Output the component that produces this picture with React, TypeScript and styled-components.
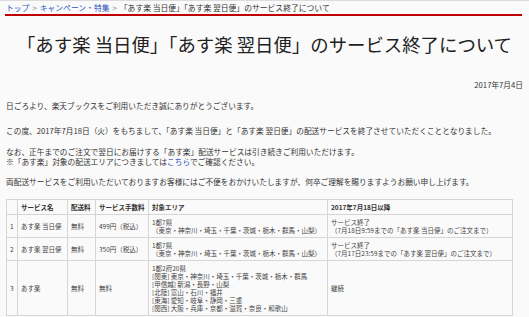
import React from "react";
import styled, { createGlobalStyle } from "styled-components";

const Global = createGlobalStyle`
  html, body { margin: 0; padding: 0; background: #fafafa; }
  body {
    font-family: "Noto Sans CJK JP", "Noto Sans", sans-serif;
    color: #333;
  }
`;

const Page = styled.div`
  border-top: 1px solid #dcdcdc;
  padding: 0 6px;
`;

const Breadcrumb = styled.nav`
  font-size: 7.8px;
  line-height: 10px;
  padding: 2px 0 1px;
  color: #333;
  white-space: nowrap;
`;

const Crumb = styled.a`
  color: #2a52be;
  text-decoration: none;
`;

const Sep = styled.span`
  color: #777;
  margin: 0 3px;
`;

const RedRule = styled.div`
  height: 2px;
  background: #bf0000;
  margin: 0 1px 0 -1px;
`;

const Title = styled.h1`
  margin: 16px 0 0;
  font-size: 18.4px;
  font-weight: 400;
  line-height: 24px;
  text-align: center;
  color: #222;
  white-space: nowrap;
`;

const DateLine = styled.p`
  margin: 24px 0 0;
  text-align: right;
  font-size: 7.7px;
  line-height: 10px;
`;

const Para = styled.p<{ $gap: number }>`
  margin: ${(p) => p.$gap}px 0 0;
  font-size: 7.7px;
  line-height: 10px;
  white-space: nowrap;
`;

const Link = styled.a`
  color: #2a52be;
  text-decoration: none;
`;

const Table = styled.table`
  margin-top: 12px;
  width: 506px;
  table-layout: fixed;
  border-collapse: collapse;
  font-size: 6.5px;
  line-height: 8px;
  border: 1px solid #cfcfcf;
`;

const Col = styled.col<{ $w: number }>`
  width: ${(p) => p.$w}px;
`;

const Th = styled.th`
  text-align: left;
  font-weight: 700;
  padding: 3px 3px;
  border: 1px solid #d6d6d6;
  white-space: nowrap;
  color: #333;
`;

const Td = styled.td`
  padding: 3px 3px;
  border: 1px solid #d6d6d6;
  vertical-align: middle;
  white-space: nowrap;
  color: #444;
`;

const Line = styled.div``;

type Row = {
  no: string;
  name: string;
  ship: string;
  fee: string;
  area: string[];
  after: string[];
};

const rows: Row[] = [
  {
    no: "1",
    name: "あす楽 当日便",
    ship: "無料",
    fee: "499円（税込）",
    area: ["1都7県", "（東京・神奈川・埼玉・千葉・茨城・栃木・群馬・山梨）"],
    after: ["サービス終了", "（7月18日9:59までの「あす楽 当日便」のご注文まで）"],
  },
  {
    no: "2",
    name: "あす楽 翌日便",
    ship: "無料",
    fee: "350円（税込）",
    area: ["1都7県", "（東京・神奈川・埼玉・千葉・茨城・栃木・群馬・山梨）"],
    after: ["サービス終了", "（7月17日23:59までの「あす楽 翌日便」のご注文まで）"],
  },
  {
    no: "3",
    name: "あす楽",
    ship: "無料",
    fee: "無料",
    area: [
      "1都2府20県",
      "[関東] 東京・神奈川・埼玉・千葉・茨城・栃木・群馬",
      "[甲信越] 新潟・長野・山梨",
      "[北陸] 富山・石川・福井",
      "[東海] 愛知・岐阜・静岡・三重",
      "[関西] 大阪・兵庫・京都・滋賀・奈良・和歌山",
    ],
    after: ["継続"],
  },
];

export default function App() {
  return (
    <>
      <Global />
      <Page>
        <Breadcrumb>
          <Crumb href="#">トップ</Crumb>
          <Sep>&gt;</Sep>
          <Crumb href="#">キャンペーン・特集</Crumb>
          <Sep>&gt;</Sep>
          <span>「あす楽 当日便」「あす楽 翌日便」のサービス終了について</span>
        </Breadcrumb>
        <RedRule />
        <Title>「あす楽 当日便」「あす楽 翌日便」のサービス終了について</Title>
        <DateLine>2017年7月4日</DateLine>
        <Para $gap={11}>日ごろより、楽天ブックスをご利用いただき誠にありがとうございます。</Para>
        <Para $gap={15}>
          この度、2017年7月18日（火）をもちまして、「あす楽 当日便」と「あす楽 翌日便」の配送サービスを終了させていただくこととなりました。
        </Para>
        <Para $gap={11}>
          なお、正午までのご注文で翌日にお届けする「あす楽」配送サービスは引き続きご利用いただけます。
          <br />
          ※「あす楽」対象の配送エリアにつきましては<Link href="#">こちら</Link>でご確認ください。
        </Para>
        <Para $gap={10}>
          両配送サービスをご利用いただいておりますお客様にはご不便をおかけいたしますが、何卒ご理解を賜りますようお願い申し上げます。
        </Para>
        <Table>
          <colgroup>
            <Col $w={11} />
            <Col $w={50} />
            <Col $w={28} />
            <Col $w={53} />
            <Col $w={179} />
            <Col $w={185} />
          </colgroup>
          <thead>
            <tr>
              <Th></Th>
              <Th>サービス名</Th>
              <Th>配送料</Th>
              <Th>サービス手数料</Th>
              <Th>対象エリア</Th>
              <Th>2017年7月18日以降</Th>
            </tr>
          </thead>
          <tbody>
            {rows.map((r) => (
              <tr key={r.no}>
                <Td>{r.no}</Td>
                <Td>{r.name}</Td>
                <Td>{r.ship}</Td>
                <Td>{r.fee}</Td>
                <Td>
                  {r.area.map((l) => (
                    <Line key={l}>{l}</Line>
                  ))}
                </Td>
                <Td>
                  {r.after.map((l) => (
                    <Line key={l}>{l}</Line>
                  ))}
                </Td>
              </tr>
            ))}
          </tbody>
        </Table>
      </Page>
    </>
  );
}
